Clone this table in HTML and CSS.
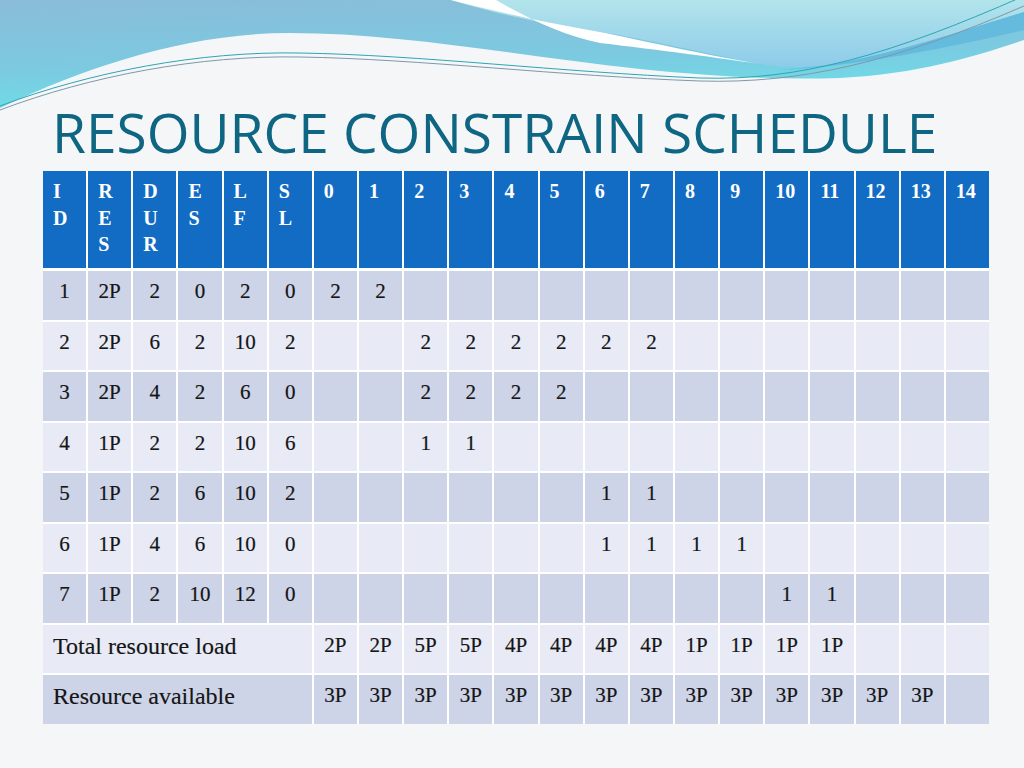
FILE: index.html
```html
<!DOCTYPE html>
<html>
<head>
<meta charset="utf-8">
<link rel="stylesheet" href="styles.css">
</head>
<body>
<div class="slide">
  <svg class="deco" width="1024" height="130" viewBox="0 0 1024 130" aria-hidden="true">
    <defs>
      <linearGradient id="gMain" x1="0" y1="0" x2="0.25" y2="1">
        <stop offset="0" stop-color="#8abcd9"/>
        <stop offset="0.6" stop-color="#7cc9e0"/>
        <stop offset="1" stop-color="#6edde8"/>
      </linearGradient>
      <linearGradient id="gLight" x1="0" y1="0" x2="0" y2="1">
        <stop offset="0" stop-color="#b2e4ea"/>
        <stop offset="1" stop-color="#8ecbea"/>
      </linearGradient>
    </defs>
    <path d="M0,0 H1024 V40 C980,55 920,74 840,78 C780,80 720,77 640,69 C520,56 400,33 290,33 C190,33 90,65 0,108 Z" fill="url(#gMain)"/>
    <path d="M451,0 H1024 V12 C950,35 880,58 820,66 C790,68 772,66 760,64 C700,52 640,38 600,32 C540,24 490,12 451,0 Z" fill="url(#gLight)"/>
    <path d="M1024,12 C950,35 880,58 820,66 C800,68 790,69 780,70 C860,66 960,45 1024,30 Z" fill="#5fb9dd" opacity="0.85"/>
    <path d="M451,0 L496,0 C530,20 565,36 600,43 C660,50 720,58 760,64 C700,54 640,40 600,32 C540,22 490,10 451,0 Z" fill="#ffffff"/>
    <path d="M0,106 C90,72 200,51 300,53 C420,55 560,72 700,78 C800,81 890,55 1024,-4" fill="none" stroke="#2ba6b4" stroke-width="1"/>
    <path d="M0,110 C90,76 200,55 300,57 C420,59 560,76 700,81 C800,84 895,62 1024,6" fill="none" stroke="#7f98a8" stroke-width="1"/>
  </svg>

  <h1 class="title">RESOURCE CONSTRAIN SCHEDULE</h1>

  <div class="grid">
    <div class="hd">I<br>D</div>
    <div class="hd">R<br>E<br>S</div>
    <div class="hd">D<br>U<br>R</div>
    <div class="hd">E<br>S</div>
    <div class="hd">L<br>F</div>
    <div class="hd">S<br>L</div>
    <div class="hd">0</div><div class="hd">1</div><div class="hd">2</div><div class="hd">3</div><div class="hd">4</div>
    <div class="hd">5</div><div class="hd">6</div><div class="hd">7</div><div class="hd">8</div><div class="hd">9</div>
    <div class="hd">10</div><div class="hd">11</div><div class="hd">12</div><div class="hd">13</div><div class="hd">14</div>

    <!-- row 1 -->
    <div class="c dk">1</div><div class="c dk">2P</div><div class="c dk">2</div><div class="c dk">0</div><div class="c dk">2</div><div class="c dk">0</div>
    <div class="c dk">2</div><div class="c dk">2</div><div class="c dk"></div><div class="c dk"></div><div class="c dk"></div>
    <div class="c dk"></div><div class="c dk"></div><div class="c dk"></div><div class="c dk"></div><div class="c dk"></div>
    <div class="c dk"></div><div class="c dk"></div><div class="c dk"></div><div class="c dk"></div><div class="c dk"></div>

    <!-- row 2 -->
    <div class="c lt">2</div><div class="c lt">2P</div><div class="c lt">6</div><div class="c lt">2</div><div class="c lt">10</div><div class="c lt">2</div>
    <div class="c lt"></div><div class="c lt"></div><div class="c lt">2</div><div class="c lt">2</div><div class="c lt">2</div>
    <div class="c lt">2</div><div class="c lt">2</div><div class="c lt">2</div><div class="c lt"></div><div class="c lt"></div>
    <div class="c lt"></div><div class="c lt"></div><div class="c lt"></div><div class="c lt"></div><div class="c lt"></div>

    <!-- row 3 -->
    <div class="c dk">3</div><div class="c dk">2P</div><div class="c dk">4</div><div class="c dk">2</div><div class="c dk">6</div><div class="c dk">0</div>
    <div class="c dk"></div><div class="c dk"></div><div class="c dk">2</div><div class="c dk">2</div><div class="c dk">2</div>
    <div class="c dk">2</div><div class="c dk"></div><div class="c dk"></div><div class="c dk"></div><div class="c dk"></div>
    <div class="c dk"></div><div class="c dk"></div><div class="c dk"></div><div class="c dk"></div><div class="c dk"></div>

    <!-- row 4 -->
    <div class="c lt">4</div><div class="c lt">1P</div><div class="c lt">2</div><div class="c lt">2</div><div class="c lt">10</div><div class="c lt">6</div>
    <div class="c lt"></div><div class="c lt"></div><div class="c lt">1</div><div class="c lt">1</div><div class="c lt"></div>
    <div class="c lt"></div><div class="c lt"></div><div class="c lt"></div><div class="c lt"></div><div class="c lt"></div>
    <div class="c lt"></div><div class="c lt"></div><div class="c lt"></div><div class="c lt"></div><div class="c lt"></div>

    <!-- row 5 -->
    <div class="c dk">5</div><div class="c dk">1P</div><div class="c dk">2</div><div class="c dk">6</div><div class="c dk">10</div><div class="c dk">2</div>
    <div class="c dk"></div><div class="c dk"></div><div class="c dk"></div><div class="c dk"></div><div class="c dk"></div>
    <div class="c dk"></div><div class="c dk">1</div><div class="c dk">1</div><div class="c dk"></div><div class="c dk"></div>
    <div class="c dk"></div><div class="c dk"></div><div class="c dk"></div><div class="c dk"></div><div class="c dk"></div>

    <!-- row 6 -->
    <div class="c lt">6</div><div class="c lt">1P</div><div class="c lt">4</div><div class="c lt">6</div><div class="c lt">10</div><div class="c lt">0</div>
    <div class="c lt"></div><div class="c lt"></div><div class="c lt"></div><div class="c lt"></div><div class="c lt"></div>
    <div class="c lt"></div><div class="c lt">1</div><div class="c lt">1</div><div class="c lt">1</div><div class="c lt">1</div>
    <div class="c lt"></div><div class="c lt"></div><div class="c lt"></div><div class="c lt"></div><div class="c lt"></div>

    <!-- row 7 -->
    <div class="c dk">7</div><div class="c dk">1P</div><div class="c dk">2</div><div class="c dk">10</div><div class="c dk">12</div><div class="c dk">0</div>
    <div class="c dk"></div><div class="c dk"></div><div class="c dk"></div><div class="c dk"></div><div class="c dk"></div>
    <div class="c dk"></div><div class="c dk"></div><div class="c dk"></div><div class="c dk"></div><div class="c dk"></div>
    <div class="c dk">1</div><div class="c dk">1</div><div class="c dk"></div><div class="c dk"></div><div class="c dk"></div>

    <!-- total resource load -->
    <div class="label lt">Total resource load</div>
    <div class="c lt">2P</div><div class="c lt">2P</div><div class="c lt">5P</div><div class="c lt">5P</div><div class="c lt">4P</div>
    <div class="c lt">4P</div><div class="c lt">4P</div><div class="c lt">4P</div><div class="c lt">1P</div><div class="c lt">1P</div>
    <div class="c lt">1P</div><div class="c lt">1P</div><div class="c lt"></div><div class="c lt"></div><div class="c lt"></div>

    <!-- resource available -->
    <div class="label dk">Resource available</div>
    <div class="c dk">3P</div><div class="c dk">3P</div><div class="c dk">3P</div><div class="c dk">3P</div><div class="c dk">3P</div>
    <div class="c dk">3P</div><div class="c dk">3P</div><div class="c dk">3P</div><div class="c dk">3P</div><div class="c dk">3P</div>
    <div class="c dk">3P</div><div class="c dk">3P</div><div class="c dk">3P</div><div class="c dk">3P</div><div class="c dk"></div>
  </div>
</div>
</body>
</html>
```

FILE: styles.css
```css
html, body {
  margin: 0;
  padding: 0;
}
body {
  background: #f5f6f8;
  font-family: "Liberation Serif", "DejaVu Serif", serif;
}
.slide {
  position: relative;
  width: 1024px;
  height: 768px;
  overflow: hidden;
  background: #f5f6f8;
}
.deco {
  position: absolute;
  left: 0;
  top: 0;
  display: block;
}
.title {
  position: relative;
  margin: 0;
  padding: 104px 0 0 52px;
  height: 55px;
  font-family: "Open Sans", "Liberation Sans", sans-serif;
  font-weight: 400;
  font-size: 55px;
  line-height: 55px;
  letter-spacing: 0;
  color: #0e6682;
  white-space: nowrap;
}
.grid {
  position: relative;
  margin: 12px 0 0 43px;
  width: 946px;
  display: grid;
  grid-template-columns: repeat(21, 1fr);
  grid-template-rows: 98px repeat(9, 48.5px);
  column-gap: 2px;
  row-gap: 2px;
  background: #ffffff;
}
.hd {
  background: #126cc4;
  color: #ffffff;
  font-weight: bold;
  font-size: 20px;
  line-height: 26.7px;
  padding: 7px 0 0 10px;
  margin-bottom: 1px;
}
.c {
  text-align: center;
  font-size: 21px;
  line-height: 24px;
  padding-top: 8px;
  color: #151515;
  -webkit-text-stroke: 0.2px #151515;
}
.label {
  grid-column: span 6;
  font-size: 24px;
  line-height: 26px;
  padding: 8px 0 0 10px;
  color: #151515;
  -webkit-text-stroke: 0.15px #151515;
}
.dk {
  background: #ced4e8;
}
.lt {
  background: #e8ebf5;
}
```
